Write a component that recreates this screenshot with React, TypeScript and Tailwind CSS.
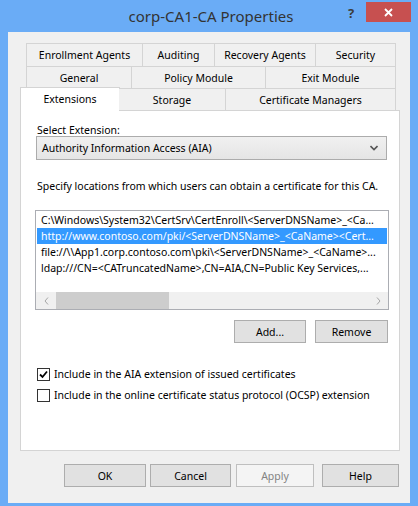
import React from 'react';

const rowOne = [
  { label: 'Enrollment Agents', w: 'w-[117px]' },
  { label: 'Auditing', w: 'w-[73px]' },
  { label: 'Recovery Agents', w: 'w-[102px]' },
  { label: 'Security', w: 'w-[81px]' },
];

const rowTwo = [
  { label: 'General', w: 'w-[106px]' },
  { label: 'Policy Module', w: 'w-[135px]' },
  { label: 'Exit Module', w: 'w-[131px]' },
];

const locations = [
  'C:\\Windows\\System32\\CertSrv\\CertEnroll\\<ServerDNSName>_<Ca...',
  'http://www.contoso.com/pki/<ServerDNSName>_<CaName><Cert...',
  'file://\\\\App1.corp.contoso.com\\pki\\<ServerDNSName>_<CaName>...',
  'ldap:///CN=<CATruncatedName>,CN=AIA,CN=Public Key Services,...',
];

function Tab({ label, w, first }: { label: string; w: string; first?: boolean }) {
  return (
    <div
      className={`${w} h-full flex items-center justify-center border-t border-l border-r border-[#d4d4d4] bg-[#f0f0f0] ${first ? '' : '-ml-px'}`}
    >
      {label}
    </div>
  );
}

function Button({ label, w, disabled }: { label: string; w: string; disabled?: boolean }) {
  return (
    <button
      className={`${w} h-[23px] border flex items-center justify-center ${
        disabled ? 'border-[#bfbfbf] bg-[#f4f4f4] text-[#838383]' : 'border-[#adadad] bg-[#e1e1e1] text-black'
      }`}
    >
      {label}
    </button>
  );
}

function Checkbox({ checked, label }: { checked?: boolean; label: string }) {
  return (
    <div className="flex items-center h-[13px]">
      <div className="w-[13px] h-[13px] border border-[#333333] bg-white flex items-center justify-center">
        {checked && (
          <svg width="9" height="9" viewBox="0 0 9 9">
            <path d="M1 4.5 L3.5 7 L8 1.5" stroke="#000" strokeWidth="1.8" fill="none" />
          </svg>
        )}
      </div>
      <span className="ml-[4px] leading-[13px]">{label}</span>
    </div>
  );
}

export default function App() {
  return (
    <div className="w-[418px] h-[506px] bg-[#6aacf6] flex flex-col font-['Noto_Sans',sans-serif] text-[10.5px] text-black leading-[16px]">
      {/* title bar */}
      <div className="h-[32px] relative flex items-center justify-center">
        <span className="text-[15px] text-[#333333] leading-[20px] ml-[4px]">corp-CA1-CA Properties</span>
        <span className="absolute left-[348px] top-[4px] text-[13px] font-bold text-[#3c3c3c] leading-[18px]">?</span>
        <div className="absolute left-[366px] top-[2px] w-[45px] h-[20px] bg-[#c75050] flex items-center justify-center">
          <svg width="9" height="9" viewBox="0 0 9 9">
            <path d="M1 1 L8 8 M8 1 L1 8" stroke="#fff" strokeWidth="1.8" />
          </svg>
        </div>
      </div>

      <div className="mx-[8px] h-[471px] bg-[#f0f0f0] pt-[11px]">
        <div className="ml-[12px] w-[380px]">
          {/* tab rows */}
          <div className="flex h-[23px] pl-[6px]">
            {rowOne.map((t, i) => (
              <Tab key={t.label} label={t.label} w={t.w} first={i === 0} />
            ))}
          </div>
          <div className="flex h-[22px] pl-[6px]">
            {rowTwo.map((t, i) => (
              <Tab key={t.label} label={t.label} w={t.w} first={i === 0} />
            ))}
          </div>
          <div className="flex items-end h-[22px] relative z-10">
            <div className="w-[100px] h-[24px] -mb-px flex items-center justify-center border-t border-l border-r border-[#d4d4d4] bg-white pb-[1px]">
              Extensions
            </div>
            <div className="w-[107px] h-[22px] -ml-px flex items-center justify-center border-t border-r border-[#d4d4d4] bg-[#f0f0f0]">
              Storage
            </div>
            <div className="w-[171px] h-[22px] -ml-px flex items-center justify-center border-t border-l border-r border-[#d4d4d4] bg-[#f0f0f0]">
              Certificate Managers
            </div>
          </div>

          {/* panel */}
          <div className="h-[341px] border border-[#d4d4d4] bg-white pl-[14px] pt-[11px]">
            <div className="pl-[2px]">Select Extension:</div>
            <div className="mt-[-2px] ml-[1px] w-[351px] h-[24px] border border-[#acacac] bg-gradient-to-b from-[#f0f0f0] to-[#e5e5e5] flex items-center justify-between pl-[5px] pr-[8px]">
              <span>Authority Information Access (AIA)</span>
              <svg width="8" height="6" viewBox="0 0 8 6">
                <path d="M0.5 1 L4 4.5 L7.5 1" stroke="#555" strokeWidth="1.6" fill="none" />
              </svg>
            </div>
            <div className="mt-[18px] pl-[2px]">Specify locations from which users can obtain a certificate for this CA.</div>

            <div className="mt-[16px] w-[354px] h-[100px] border border-[#abadb3] bg-white flex flex-col">
              <div className="pt-[1px] flex-1">
                {locations.map((l, i) => (
                  <div
                    key={l}
                    className={`h-[16px] mx-[1px] pl-[4px] whitespace-nowrap overflow-hidden ${
                      i === 1 ? 'bg-[#3399ff] text-white' : ''
                    }`}
                  >
                    {l}
                  </div>
                ))}
              </div>
              <div className="h-[17px] bg-[#f0f0f0] flex items-center">
                <div className="w-[20px] flex justify-center">
                  <svg width="5" height="8" viewBox="0 0 5 8">
                    <path d="M4 0.5 L1 4 L4 7.5" stroke="#a6a6a6" strokeWidth="1" fill="none" />
                  </svg>
                </div>
                <div className="w-[113px] h-[17px] bg-[#cdcdcd]" />
                <div className="flex-1" />
                <div className="w-[20px] flex justify-center">
                  <svg width="5" height="8" viewBox="0 0 5 8">
                    <path d="M1 0.5 L4 4 L1 7.5" stroke="#a6a6a6" strokeWidth="1" fill="none" />
                  </svg>
                </div>
              </div>
            </div>

            <div className="mt-[10px] w-[353px] flex justify-end gap-[9px]">
              <Button label="Add..." w="w-[72px]" />
              <Button label="Remove" w="w-[73px]" />
            </div>

            <div className="mt-[25px] pl-[2px] flex flex-col gap-[8px]">
              <Checkbox checked label="Include in the AIA extension of issued certificates" />
              <Checkbox label="Include in the online certificate status protocol (OCSP) extension" />
            </div>
          </div>
        </div>

        {/* dialog buttons */}
        <div className="mt-[13px] ml-[56px] flex">
          <Button label="OK" w="w-[82px]" />
          <div className="ml-[4px]">
            <Button label="Cancel" w="w-[81px]" />
          </div>
          <div className="ml-[5px]">
            <Button label="Apply" w="w-[78px]" disabled />
          </div>
          <div className="ml-[8px]">
            <Button label="Help" w="w-[77px]" />
          </div>
        </div>
      </div>
    </div>
  );
}
